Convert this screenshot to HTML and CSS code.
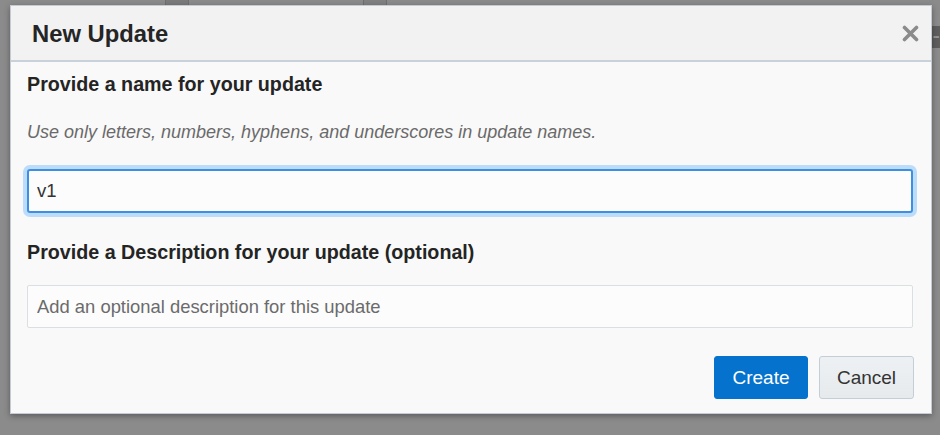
FILE: index.html
```html
<!DOCTYPE html>
<html lang="en">
<head>
<meta charset="utf-8">
<title>New Update</title>
<link rel="stylesheet" href="styles.css">
</head>
<body>
<div class="backdrop">
  <div class="bg-mark bg-mark-a"></div>
  <div class="bg-mark bg-mark-b"></div>
  <div class="bg-more">•••</div>
  <div class="dialog" role="dialog" aria-labelledby="dlg-title">
    <div class="dialog-header">
      <h1 id="dlg-title" class="dialog-title">New Update</h1>
      <button class="close-btn" aria-label="Close">
        <svg width="17" height="17" viewBox="0 0 17 17"><path d="M2.5 2.5 L14.5 14.5 M14.5 2.5 L2.5 14.5" stroke="#8b8b8b" stroke-width="3.6" stroke-linecap="round"/></svg>
      </button>
    </div>
    <div class="dialog-body">
      <h2 class="field-label">Provide a name for your update</h2>
      <p class="help-text">Use only letters, numbers, hyphens, and underscores in update names.</p>
      <input class="text-input focused" type="text" value="v1">
      <h2 class="field-label second">Provide a Description for your update (optional)</h2>
      <input class="text-input desc" type="text" placeholder="Add an optional description for this update">
      <div class="actions">
        <button class="btn btn-primary">Create</button>
        <button class="btn btn-secondary">Cancel</button>
      </div>
    </div>
  </div>
</div>
</body>
</html>
```

FILE: styles.css
```css
* { box-sizing: border-box; }
html, body { margin: 0; padding: 0; }
body {
  background: #8b8b8b;
  font-family: "Liberation Sans", Arial, Helvetica, sans-serif;
  color: #222;
}
.backdrop {
  position: relative;
  width: 940px;
  height: 435px;
  overflow: hidden;
  padding: 5px 0 0 10px;
  background: #8b8b8b;
}
.bg-mark {
  position: absolute;
  top: 0;
  height: 6px;
  border-left: 1px solid #6f6f6f;
  border-right: 1px solid #6f6f6f;
}
.bg-mark-a { left: 165px; width: 24px; background: #7b7b7b; }
.bg-mark-b { left: 363px; width: 24px; background: #818181; }
.bg-more {
  position: absolute;
  left: 932px;
  top: 26px;
  width: 20px;
  height: 22px;
  background: #5e5e5e;
  color: #9a9a9a;
  font-size: 8px;
  line-height: 22px;
  letter-spacing: -1px;
  padding-left: 1px;
}
.dialog {
  position: relative;
  width: 922px;
  height: 409px;
  background: #f9f9f9;
  border: 1px solid #c3ccd4;
  box-shadow: 0 2px 6px rgba(0, 0, 0, 0.35);
  display: flex;
  flex-direction: column;
}
.dialog-header {
  height: 56px;
  background: #f2f2f2;
  border-bottom: 2px solid #c9d2da;
  display: flex;
  align-items: center;
  justify-content: space-between;
  padding: 0 12px 0 21px;
}
.dialog-title {
  margin: 0;
  font-size: 23.8px;
  font-weight: bold;
  color: #252525;
  padding-top: 1px;
}
.close-btn {
  background: none;
  border: 0;
  padding: 0;
  width: 18px;
  height: 18px;
  display: flex;
  align-items: center;
  justify-content: center;
  margin-top: 1px;
}
.dialog-body {
  flex: 1;
  padding: 10px 17px 14px 16px;
  display: flex;
  flex-direction: column;
}
.field-label {
  margin: 0;
  font-size: 19.7px;
  line-height: 24px;
  font-weight: bold;
  color: #242424;
}
.field-label.second { margin-top: 27px; }
.help-text {
  margin: 26px 0 0;
  font-size: 18px;
  line-height: 20px;
  font-style: italic;
  color: #6a6a6a;
}
.text-input {
  display: block;
  width: 886px;
  margin: 0;
  font-family: "Liberation Sans", Arial, Helvetica, sans-serif;
  font-size: 18.4px;
  color: #333;
  background: #fcfcfd;
  outline: none;
}
.text-input.focused {
  margin-top: 27px;
  height: 44px;
  border: 2px solid #3f8fe0;
  border-radius: 3px;
  padding: 0 8px;
  box-shadow: 0 0 0 4px #bcdcfb;
  font-size: 18.5px;
}
.text-input.desc {
  margin-top: 21px;
  height: 43px;
  border: 1px solid #dadfe3;
  border-radius: 2px;
  padding: 0 9px;
}
.text-input.desc::placeholder { color: #6b6b6b; opacity: 1; }
.actions {
  margin-top: 28px;
  display: flex;
  justify-content: flex-end;
  gap: 11px;
}
.btn {
  height: 43px;
  font-family: "Liberation Sans", Arial, Helvetica, sans-serif;
  font-size: 19px;
  border-radius: 3px;
  padding: 0;
}
.btn-primary {
  width: 94px;
  background: #0572ce;
  border: 1px solid #0572ce;
  color: #fff;
}
.btn-secondary {
  width: 95px;
  background: linear-gradient(#eef1f3, #e6eaed);
  border: 1px solid #c4ced7;
  color: #333;
}
```
